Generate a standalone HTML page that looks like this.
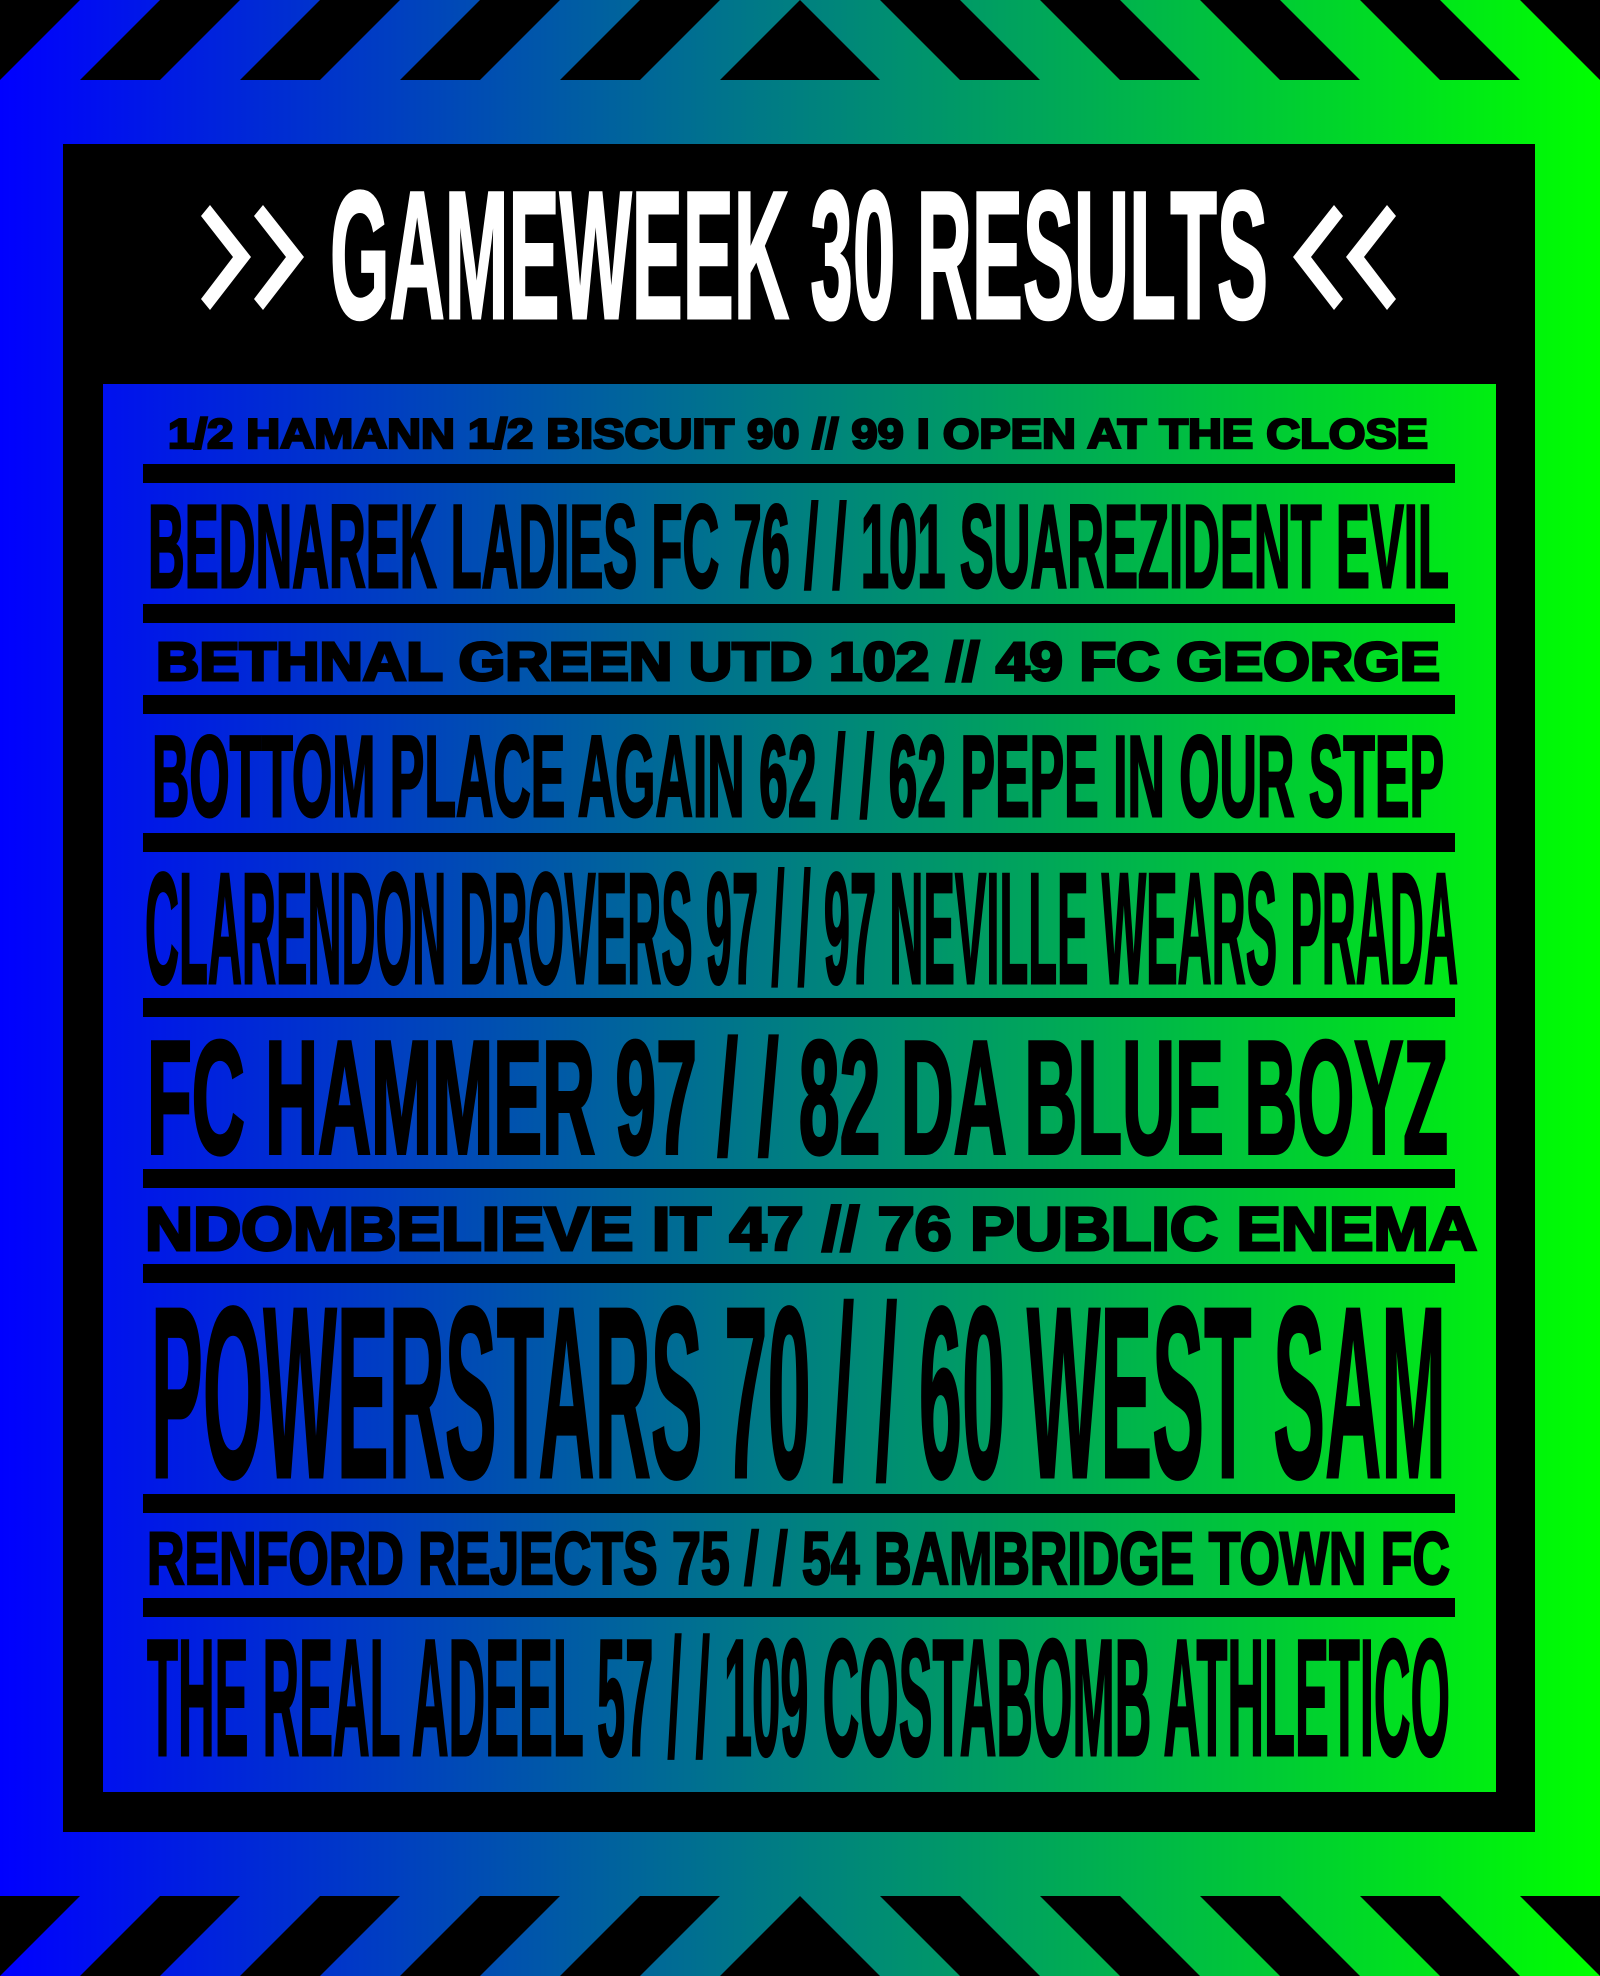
<!DOCTYPE html>
<html><head><meta charset="utf-8"><style>
html,body{margin:0;padding:0;width:1600px;height:1976px;overflow:hidden;background:#000}
svg{display:block}
text{font-family:"Liberation Sans",sans-serif;font-weight:bold}
</style></head><body>
<svg width="1600" height="1976" viewBox="0 0 1600 1976" xmlns="http://www.w3.org/2000/svg">
<defs>
<linearGradient id="g" x1="0" y1="0" x2="1600" y2="0" gradientUnits="userSpaceOnUse">
<stop offset="0" stop-color="#0000ff"/><stop offset="0.5" stop-color="#008080"/><stop offset="1" stop-color="#00ff00"/>
</linearGradient>
<g id="stripes">
<polygon points="0,0 80,0 0,80"/>
<polygon points="160,0 240,0 160,80 80,80"/>
<polygon points="320,0 400,0 320,80 240,80"/>
<polygon points="480,0 560,0 480,80 400,80"/>
<polygon points="640,0 720,0 640,80 560,80"/>
<polygon points="800,0 880,80 720,80"/>
<polygon points="880,0 960,0 1040,80 960,80"/>
<polygon points="1040,0 1120,0 1200,80 1120,80"/>
<polygon points="1200,0 1280,0 1360,80 1280,80"/>
<polygon points="1360,0 1440,0 1520,80 1440,80"/>
<polygon points="1520,0 1600,0 1600,80"/>
</g>
</defs>
<rect width="1600" height="1976" fill="url(#g)"/>
<use href="#stripes"/>
<use href="#stripes" y="1896"/>
<rect x="63" y="144" width="1472" height="1688" fill="#000"/>
<rect x="103" y="384" width="1393" height="1408" fill="url(#g)"/>
<polygon points="201,216 210,205 251,257 210,310 201,299 233,257" fill="#fff"/>
<polygon points="254,216 263,205 304,257 263,310 254,299 286,257" fill="#fff"/>
<polygon points="1396,216 1387,205 1346,257 1387,310 1396,299 1364,257" fill="#fff"/>
<polygon points="1343,216 1334,205 1293,257 1334,310 1343,299 1311,257" fill="#fff"/>
<text x="330" y="318" font-size="182" fill="#fff" stroke="#fff" stroke-width="3" textLength="938" lengthAdjust="spacingAndGlyphs">GAMEWEEK 30 RESULTS</text>
<g fill="#000">
<rect x="143" y="464" width="1312" height="19"/>
<rect x="143" y="604" width="1312" height="19"/>
<rect x="143" y="695" width="1312" height="19"/>
<rect x="143" y="833" width="1312" height="19"/>
<rect x="143" y="998" width="1312" height="19"/>
<rect x="143" y="1169" width="1312" height="19"/>
<rect x="143" y="1264" width="1312" height="19"/>
<rect x="143" y="1494" width="1312" height="19"/>
<rect x="143" y="1598" width="1312" height="19"/>
</g>
<g fill="#000" stroke="#000">
<text x="168" y="448" font-size="42" stroke-width="2.5" textLength="1260" lengthAdjust="spacingAndGlyphs">1/2 HAMANN 1/2 BISCUIT 90 // 99 I OPEN AT THE CLOSE</text>
<text x="148" y="587" font-size="118" stroke-width="3" textLength="1301" lengthAdjust="spacingAndGlyphs">BEDNAREK LADIES FC 76 / / 101 SUAREZIDENT EVIL</text>
<text x="156" y="680" font-size="54" stroke-width="3" textLength="1284" lengthAdjust="spacingAndGlyphs">BETHNAL GREEN UTD 102 // 49 FC GEORGE</text>
<text x="152" y="816" font-size="115" stroke-width="3" textLength="1292" lengthAdjust="spacingAndGlyphs">BOTTOM PLACE AGAIN 62 / / 62 PEPE IN OUR STEP</text>
<text x="145" y="983" font-size="158" stroke-width="3" textLength="1313" lengthAdjust="spacingAndGlyphs">CLARENDON DROVERS 97 / / 97 NEVILLE WEARS PRADA</text>
<text x="147" y="1153" font-size="161" stroke-width="4" textLength="1301" lengthAdjust="spacingAndGlyphs">FC HAMMER 97 / / 82 DA BLUE BOYZ</text>
<text x="145" y="1250" font-size="61" stroke-width="3" textLength="1332" lengthAdjust="spacingAndGlyphs">NDOMBELIEVE IT 47 // 76 PUBLIC ENEMA</text>
<text x="151" y="1477" font-size="244" stroke-width="3" textLength="1295" lengthAdjust="spacingAndGlyphs">POWERSTARS 70 / / 60 WEST SAM</text>
<text x="147" y="1584" font-size="74" stroke-width="2.5" textLength="1303" lengthAdjust="spacingAndGlyphs">RENFORD REJECTS 75 / / 54 BAMBRIDGE TOWN FC</text>
<text x="147" y="1755" font-size="166" stroke-width="3" textLength="1303" lengthAdjust="spacingAndGlyphs">THE REAL ADEEL 57 / / 109 COSTABOMB ATHLETICO</text>
</g>
</svg>
</body></html>
